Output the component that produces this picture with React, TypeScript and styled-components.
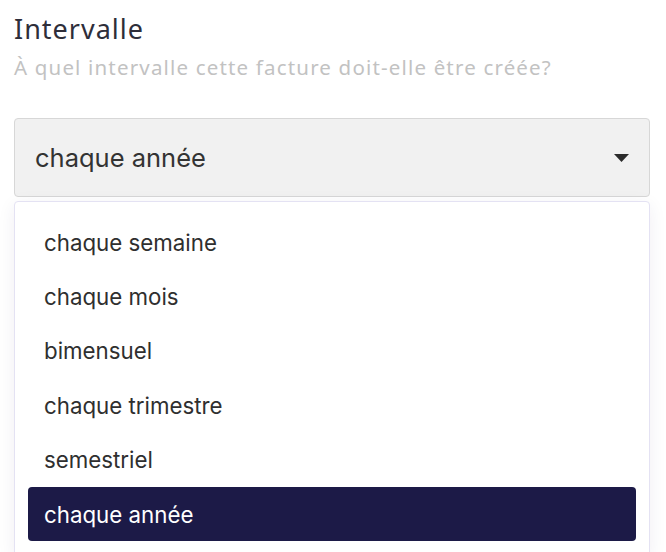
import React from "react";
import styled, { createGlobalStyle } from "styled-components";

const Global = createGlobalStyle`
  html, body { margin: 0; padding: 0; background: #ffffff; }
  body { width: 666px; height: 552px; overflow: hidden; }
`;

const Page = styled.div`
  padding: 12px 16px 0 14px;
  display: flex;
  flex-direction: column;
`;

const Title = styled.h1`
  margin: 0;
  font-family: "Noto Sans", Lato, sans-serif;
  font-weight: 400;
  font-size: 27px;
  letter-spacing: 1px;
  line-height: 34px;
  color: #2e2e3a;
`;

const Subtitle = styled.p`
  margin: 8px 0 0;
  font-family: "Noto Sans", Lato, sans-serif;
  font-size: 20.5px;
  letter-spacing: 1.17px;
  line-height: 26px;
  color: #c2c2c2;
`;

const Field = styled.div`
  margin-top: 38px;
  display: flex;
  flex-direction: column;
  gap: 4px;
`;

const SelectBox = styled.div`
  box-sizing: border-box;
  height: 79px;
  display: flex;
  align-items: center;
  justify-content: space-between;
  padding: 0 20px 0 20px;
  background: #f1f1f1;
  border: 1px solid #d7d7d7;
  border-radius: 4px;
  font-family: Inter, "Noto Sans", sans-serif;
  font-size: 25.5px;
  color: #333333;
`;

const Menu = styled.ul`
  list-style: none;
  margin: 0;
  padding: 13px 13px 14px 13px;
  background: #ffffff;
  border: 1px solid #e4e2f3;
  border-radius: 4px;
  box-shadow: 0 4px 18px rgba(40, 30, 90, 0.07);
  display: flex;
  flex-direction: column;
`;

const Option = styled.li<{ $selected?: boolean }>`
  height: 54.4px;
  display: flex;
  align-items: center;
  padding: 0 16px;
  border-radius: 4px;
  font-family: Inter, "Noto Sans", sans-serif;
  font-size: 22.3px;
  color: ${(p) => (p.$selected ? "#ffffff" : "#2f2f2f")};
  background: ${(p) => (p.$selected ? "#1c1a47" : "transparent")};
`;

const Caret = () => (
  <svg width="15" height="8" viewBox="0 0 15 8">
    <path d="M0 0 H15 L7.5 8 Z" fill="#2b2b2b" />
  </svg>
);

const options = [
  "chaque semaine",
  "chaque mois",
  "bimensuel",
  "chaque trimestre",
  "semestriel",
  "chaque année",
];

export default function App() {
  const selected = "chaque année";
  return (
    <>
      <Global />
      <Page>
        <Title>Intervalle</Title>
        <Subtitle>À quel intervalle cette facture doit-elle être créée?</Subtitle>
        <Field>
          <SelectBox>
            <span>{selected}</span>
            <Caret />
          </SelectBox>
          <Menu>
            {options.map((o) => (
              <Option key={o} $selected={o === selected}>
                {o}
              </Option>
            ))}
          </Menu>
        </Field>
      </Page>
    </>
  );
}
